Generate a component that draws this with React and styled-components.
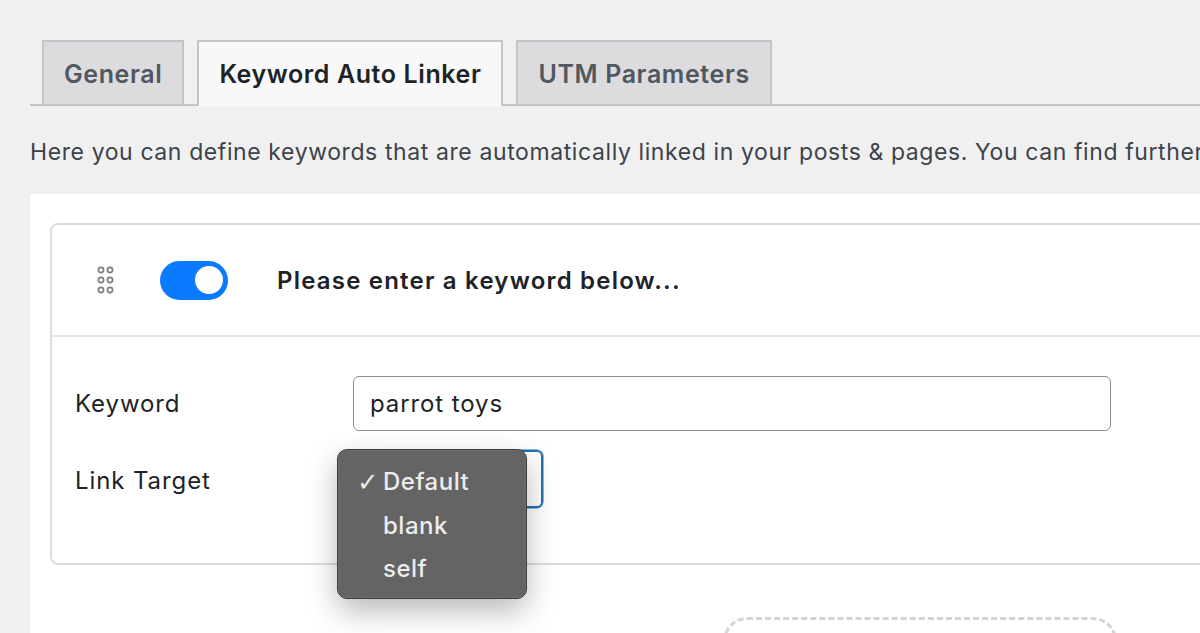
import React from "react";
import styled, { createGlobalStyle } from "styled-components";

const GlobalStyle = createGlobalStyle`
  html, body { margin: 0; padding: 0; }
  body {
    background: #f0f0f1;
    font-family: Inter, "Noto Sans", "Liberation Sans", sans-serif;
    overflow: hidden;
    width: 1200px;
    height: 633px;
  }
`;

const Page = styled.div`
  padding: 40px 0 0 30px;
  width: 1400px;
`;

const TabBar = styled.div`
  display: flex;
  align-items: flex-end;
  gap: 13px;
  padding-left: 12px;
  border-bottom: 2px solid #c3c4c7;
  height: 64px;
`;

const Tab = styled.div`
  box-sizing: border-box;
  height: ${(p) => (p.$active ? "66px" : "64px")};
  margin-bottom: ${(p) => (p.$active ? "-2px" : "0")};
  padding: 0 ${(p) => p.$pad}px;
  display: flex;
  align-items: center;
  border: 2px solid #c3c4c7;
  border-bottom: none;
  background: ${(p) => (p.$active ? "#f8f8f8" : "#dcdcde")};
  color: ${(p) => (p.$active ? "#1d2327" : "#50575e")};
  font-size: 25px;
  font-weight: 600;
  letter-spacing: 0.6px;
  padding-top: ${(p) => (p.$active ? "0" : "2px")};
`;

const Description = styled.p`
  margin: 30px 0 25px;
  font-size: 23px;
  line-height: 33px;
  color: #3c434a;
  white-space: nowrap;
  letter-spacing: 0.6px;
`;

const Panel = styled.div`
  background: #fff;
  padding: 29px 0 80px 20px;
`;

const Card = styled.div`
  width: 1300px;
  border: 2px solid #dcdcde;
  border-radius: 8px;
  background: #fff;
`;

const CardHeader = styled.div`
  display: flex;
  align-items: center;
  height: 110px;
  padding-left: 44px;
  border-bottom: 2px solid #e6e6e6;
`;

const DragHandle = styled.svg`
  flex: none;
  width: 20px;
  height: 28px;
  margin-right: 44px;
`;

const Toggle = styled.div`
  flex: none;
  box-sizing: border-box;
  width: 68px;
  height: 39px;
  border-radius: 20px;
  background: #0a7bff;
  display: flex;
  align-items: center;
  justify-content: flex-end;
  padding-right: 5px;
  margin-right: 49px;
`;

const Knob = styled.span`
  width: 28px;
  height: 28px;
  border-radius: 50%;
  background: #fff;
`;

const CardTitle = styled.div`
  font-size: 24px;
  font-weight: 600;
  color: #1d2327;
  letter-spacing: 1.2px;
`;

const CardBody = styled.div`
  padding: 39px 0 55px 23px;
  display: flex;
  flex-direction: column;
  gap: 19px;
`;

const Row = styled.div`
  display: flex;
  align-items: center;
`;

const Label = styled.div`
  width: 278px;
  flex: none;
  font-size: 24px;
  letter-spacing: 0.9px;
  color: #1d2327;
  padding-top: ${(p) => p.$nudge || 0}px;
`;

const TextInput = styled.div`
  box-sizing: border-box;
  width: 758px;
  height: 55px;
  border: 1.5px solid #8c8f94;
  border-radius: 6px;
  display: flex;
  align-items: center;
  padding-left: 16px;
  font-size: 24px;
  letter-spacing: 0.9px;
  color: #1d2327;
`;

const SelectWrap = styled.div`
  position: relative;
  width: 190px;
  height: 58px;
`;

const SelectBox = styled.div`
  box-sizing: border-box;
  width: 100%;
  height: 100%;
  border: 2px solid #2271b1;
  border-radius: 6px;
  box-shadow: 0 0 0 0.5px #2271b1;
`;

const Menu = styled.div`
  position: absolute;
  left: -16px;
  top: -1px;
  box-sizing: border-box;
  width: 190px;
  height: 150px;
  padding-top: 10px;
  background: #646464;
  border: 1px solid #3c3c3c;
  border-radius: 10px;
  box-shadow: 0 12px 30px rgba(0, 0, 0, 0.28), inset 0 0 0 0.5px rgba(255, 255, 255, 0.15);
`;

const MenuItem = styled.div`
  display: flex;
  align-items: center;
  height: 43.5px;
  padding-left: 19px;
  font-size: 24px;
  font-weight: 500;
  letter-spacing: 0.5px;
  color: #ececec;
`;

const Check = styled.span`
  width: 26px;
  flex: none;
  font-family: "DejaVu Sans", sans-serif;
  font-size: 26px;
  font-weight: 400;
  line-height: 1;
`;

const AddBox = styled.div`
  margin: 52px 0 0 673px;
  width: 394px;
  height: 60px;
  box-sizing: border-box;
  border: 3px dashed #d4d4d4;
  border-radius: 24px;
`;

function DragIcon() {
  const pts = [];
  for (let r = 0; r < 3; r++) {
    for (let c = 0; c < 2; c++) {
      pts.push([5 + c * 9, 4 + r * 10]);
    }
  }
  return (
    <DragHandle viewBox="0 0 20 28">
      {pts.map(([x, y], i) => (
        <circle key={i} cx={x} cy={y} r="2.6" fill="none" stroke="#7c7f84" strokeWidth="1.7" />
      ))}
    </DragHandle>
  );
}

export default function App() {
  return (
    <>
      <GlobalStyle />
      <Page>
        <TabBar>
          <Tab $pad={20}>General</Tab>
          <Tab $active $pad={20}>Keyword Auto Linker</Tab>
          <Tab $pad={20}>UTM Parameters</Tab>
        </TabBar>
        <Description>
          Here you can define keywords that are automatically linked in your posts &amp; pages. You can find further
        </Description>
        <Panel>
          <Card>
            <CardHeader>
              <DragIcon />
              <Toggle>
                <Knob />
              </Toggle>
              <CardTitle>Please enter a keyword below...</CardTitle>
            </CardHeader>
            <CardBody>
              <Row>
                <Label>Keyword</Label>
                <TextInput>parrot toys</TextInput>
              </Row>
              <Row>
                <Label $nudge={3}>Link Target</Label>
                <SelectWrap>
                  <SelectBox />
                  <Menu>
                    <MenuItem>
                      <Check>✓</Check>Default
                    </MenuItem>
                    <MenuItem>
                      <Check />blank
                    </MenuItem>
                    <MenuItem>
                      <Check />self
                    </MenuItem>
                  </Menu>
                </SelectWrap>
              </Row>
            </CardBody>
          </Card>
          <AddBox />
        </Panel>
      </Page>
    </>
  );
}
